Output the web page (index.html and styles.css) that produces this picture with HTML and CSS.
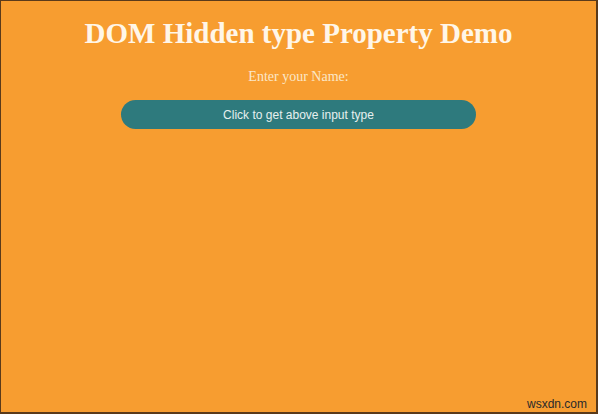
FILE: index.html
```html
<!DOCTYPE html>
<html>
<head>
<meta charset="utf-8">
<link rel="stylesheet" href="styles.css">
</head>
<body>
<div class="frame">
  <h1 class="title">DOM Hidden type Property Demo</h1>
  <p class="label">Enter your Name:</p>
  <div class="btn-row"><button class="btn">Click to get above input type</button></div>
  <div class="spacer"></div>
  <div class="mark">wsxdn.com</div>
</div>
</body>
</html>
```
FILE: styles.css
```css
html, body { margin: 0; padding: 0; background: #ffffff; }
.frame {
  box-sizing: border-box;
  width: 598px;
  height: 414px;
  background: #f79d30;
  border-top: 1px solid #5a3a1a;
  border-left: 1px solid #5a3a1a;
  border-right: 2px solid #5a3a1a;
  border-bottom: 2px solid #5a3a1a;
  display: flex;
  flex-direction: column;
  align-items: center;
}
.title {
  margin: 15px 0 0 0;
  font-family: "Liberation Serif", serif;
  font-weight: bold;
  font-size: 29px;
  line-height: 34px;
  color: #fff6e8;
}
.label {
  margin: 18px 0 0 0;
  font-family: "Liberation Serif", serif;
  font-size: 14px;
  line-height: 18px;
  color: #fbe7c8;
}
.btn-row { margin-top: 14px; }
.btn {
  width: 355px;
  height: 29px;
  border: none;
  border-radius: 15px;
  background: #2e7a7d;
  color: #e6f0ef;
  font-family: "Liberation Sans", Arial, sans-serif;
  font-size: 12px;
  padding: 0;
}
.spacer { flex: 1; }
.mark {
  align-self: flex-end;
  margin: 0 9px 1px 0;
  font-family: "Liberation Sans", Arial, sans-serif;
  font-size: 12px;
  color: #2a2a2a;
}
```
